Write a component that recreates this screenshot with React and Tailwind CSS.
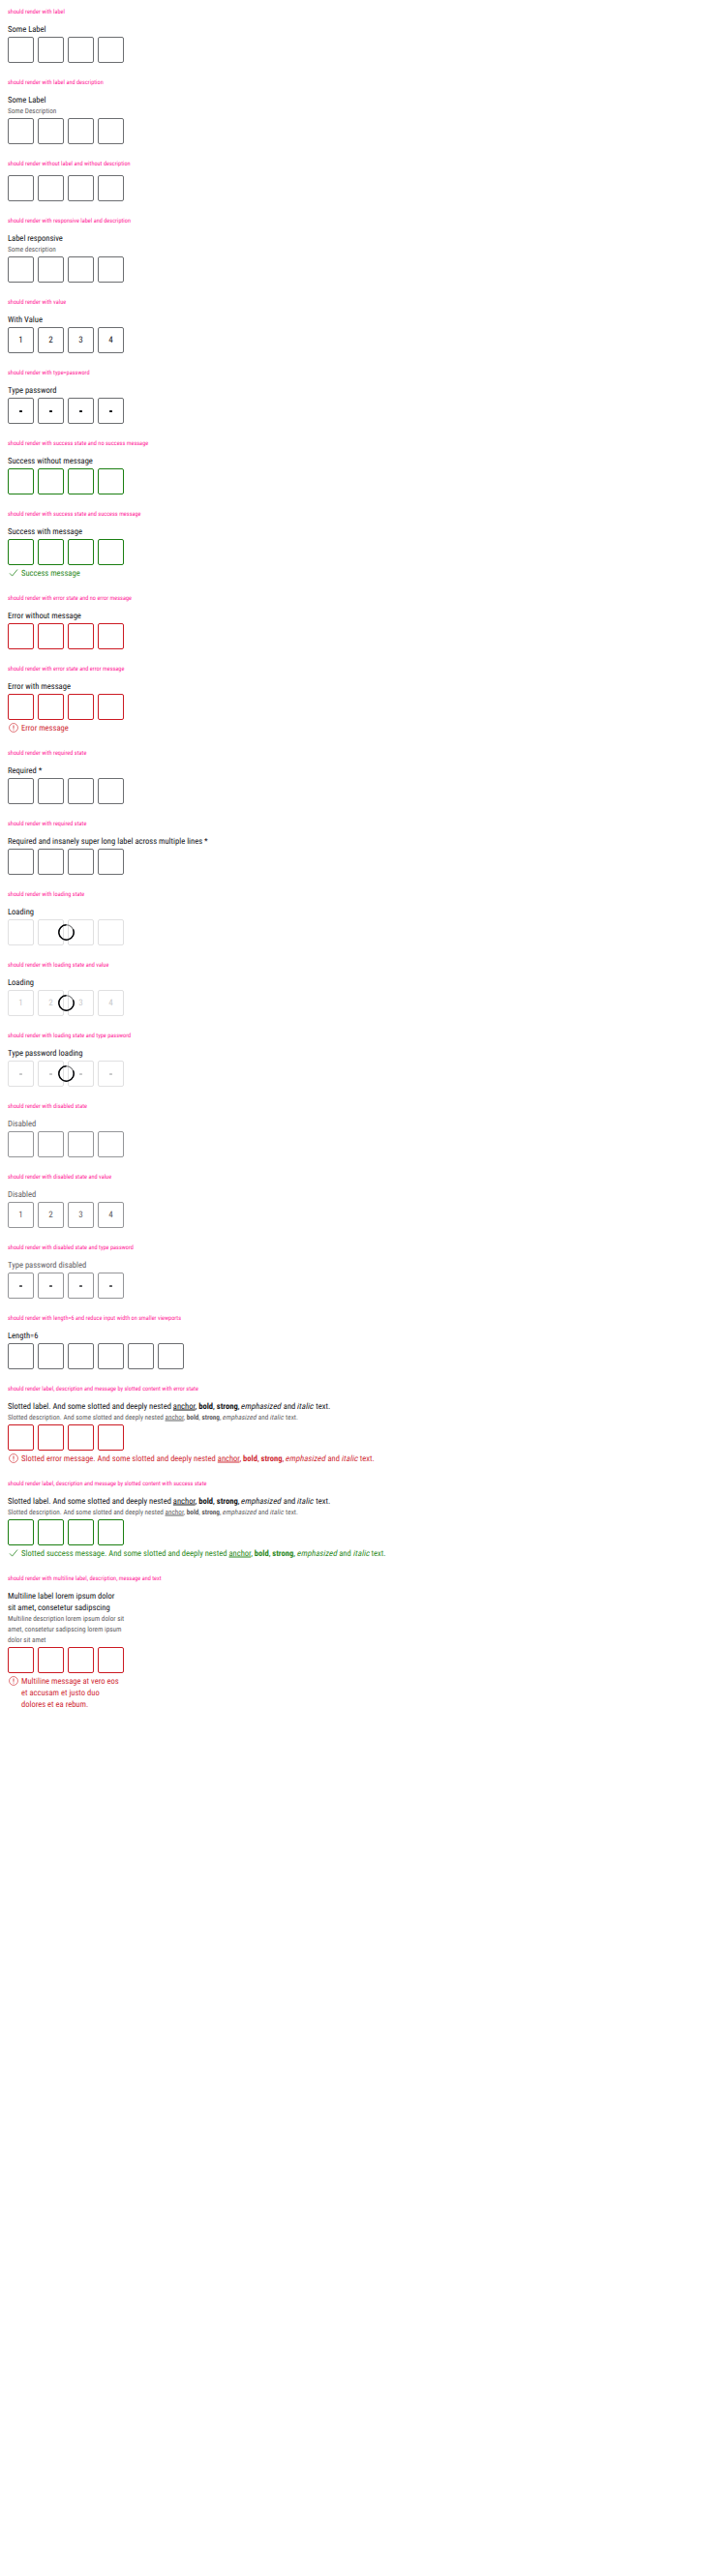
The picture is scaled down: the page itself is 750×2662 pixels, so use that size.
const TONES = {
  none: 'border-[#6b6d70]',
  success: 'border-[#197e10]',
  error: 'border-[#cc1922]',
  loading: 'border-[#e0e0e1]',
  disabled: 'border-[#949598]',
};

const SLANT = 'inline-block -skew-x-12 tracking-[0.08px] not-italic';

function Rich({ lead }) {
  return (
    <>
      {lead} And some slotted and deeply nested <span className="underline">anchor</span>, <b className="font-bold">bold</b>,{' '}
      <strong className="font-bold">strong</strong>, <em className={SLANT}>emphasized</em> and <i className={SLANT}>italic</i> text.
    </>
  );
}

function Spinner() {
  return (
    <svg className="absolute left-[51.5px] top-[5px] h-[17px] w-[17px]" viewBox="0 0 17 17" fill="none">
      <circle cx="8.5" cy="8.5" r="7.7" stroke="#77787a" strokeWidth="1.1" />
      <path d="M15.5 5.3A7.7 7.7 0 1 1 8.5 .8" stroke="#010205" strokeWidth="1.4" />
    </svg>
  );
}

function StateIcon({ state }) {
  return state === 'error' ? (
    <svg className="h-3 w-3 shrink-0" viewBox="0 0 24 24" fill="none" stroke="#cc1922" strokeWidth="1.2">
      <circle cx="12" cy="12" r="8.9" />
      <path d="M12 7v6.5M12 15.2v1.8" strokeWidth="1.6" />
    </svg>
  ) : (
    <svg className="h-3 w-3 shrink-0" viewBox="0 0 24 24" fill="none" stroke="#197e10" strokeWidth="1.5">
      <path d="M4 12.8l5.2 5.4L20 5" />
    </svg>
  );
}

function PinCode({ title, label, desc, state = 'none', message, kind, length = 4 }) {
  const cells = Array.from({ length }, (_, i) => i + 1);
  const ink = state === 'loading' ? 'text-[#c9cacb]' : state === 'disabled' ? 'text-[#5f6063]' : 'text-[#1b1c1f]';
  return (
    <section className="pb-2 pl-2">
      <h2 className="h-6 text-[6.27px] leading-[24px] text-[#ff2399]">{title}</h2>
      {label && (
        <div className={`translate-y-[0.5px] text-[8.56px] leading-[12px] ${state === 'disabled' ? 'text-[#5f6063]' : 'text-[#131417]'}`}>{label}</div>
      )}
      {desc && <div className="-translate-y-[0.5px] text-[7.22px] leading-[11px] text-[#5f6063]">{desc}</div>}
      <div className={`relative flex gap-1 ${label ? 'mt-0.5' : ''}`}>
        {cells.map((n) => (
          <div
            key={n}
            className={`flex h-[27px] w-[27px] items-center justify-center rounded-[2px] border bg-white text-[9px] leading-[12px] ${TONES[state]} ${ink}`}
          >
            {kind === 'value' && n}
            {kind === 'password' && <span className="mt-px h-[2px] w-[3px] rounded-[0.5px] bg-current" />}
          </div>
        ))}
        {state === 'loading' && <Spinner />}
      </div>
      {message && (
        <div className={`mt-0.5 flex gap-0.5 text-[8.54px] leading-[12px] ${state === 'error' ? 'text-[#d02b34]' : 'text-[#2c8a23]'}`}>
          <StateIcon state={state} />
          <div className="translate-y-[0.5px]">{message}</div>
        </div>
      )}
    </section>
  );
}

const CASES = [
  { title: 'should render with label', label: 'Some Label' },
  { title: 'should render with label and description', label: 'Some Label', desc: 'Some Description' },
  { title: 'should render without label and without description' },
  { title: 'should render with responsive label and description', label: 'Label responsive', desc: 'Some description' },
  { title: 'should render with value', label: 'With Value', kind: 'value' },
  { title: 'should render with type=password', label: 'Type password', kind: 'password' },
  { title: 'should render with success state and no success message', label: 'Success without message', state: 'success' },
  { title: 'should render with success state and success message', label: 'Success with message', state: 'success', message: 'Success message' },
  { title: 'should render with error state and no error message', label: 'Error without message', state: 'error' },
  { title: 'should render with error state and error message', label: 'Error with message', state: 'error', message: 'Error message' },
  { title: 'should render with required state', label: 'Required *' },
  { title: 'should render with required state', label: 'Required and insanely super long label across multiple lines *' },
  { title: 'should render with loading state', label: 'Loading', state: 'loading' },
  { title: 'should render with loading state and value', label: 'Loading', state: 'loading', kind: 'value' },
  { title: 'should render with loading state and type password', label: 'Type password loading', state: 'loading', kind: 'password' },
  { title: 'should render with disabled state', label: 'Disabled', state: 'disabled' },
  { title: 'should render with disabled state and value', label: 'Disabled', state: 'disabled', kind: 'value' },
  { title: 'should render with disabled state and type password', label: 'Type password disabled', state: 'disabled', kind: 'password' },
  { title: 'should render with length=6 and reduce input width on smaller viewports', label: 'Length=6', length: 6 },
  {
    title: 'should render label, description and message by slotted content with error state',
    label: <Rich lead="Slotted label." />,
    desc: <Rich lead="Slotted description." />,
    state: 'error',
    message: <Rich lead="Slotted error message." />,
  },
  {
    title: 'should render label, description and message by slotted content with success state',
    label: <Rich lead="Slotted label." />,
    desc: <Rich lead="Slotted description." />,
    state: 'success',
    message: <Rich lead="Slotted success message." />,
  },
  {
    title: 'should render with multiline label, description, message and text',
    label: <>Multiline label lorem ipsum dolor<br />sit amet, consetetur sadipscing</>,
    desc: <>Multiline description lorem ipsum dolor sit<br />amet, consetetur sadipscing lorem ipsum<br />dolor sit amet</>,
    state: 'error',
    message: <>Multiline message at vero eos<br />et accusam et justo duo<br />dolores et ea rebum.</>,
  },
];

export default function App() {
  return (
    <main className="min-h-[2662px] w-[750px] whitespace-nowrap bg-white font-['Roboto_Condensed','Roboto','Liberation_Sans_Narrow',sans-serif] [text-rendering:geometricPrecision]">
      {CASES.map((c, i) => (
        <PinCode key={i} {...c} />
      ))}
    </main>
  );
}
